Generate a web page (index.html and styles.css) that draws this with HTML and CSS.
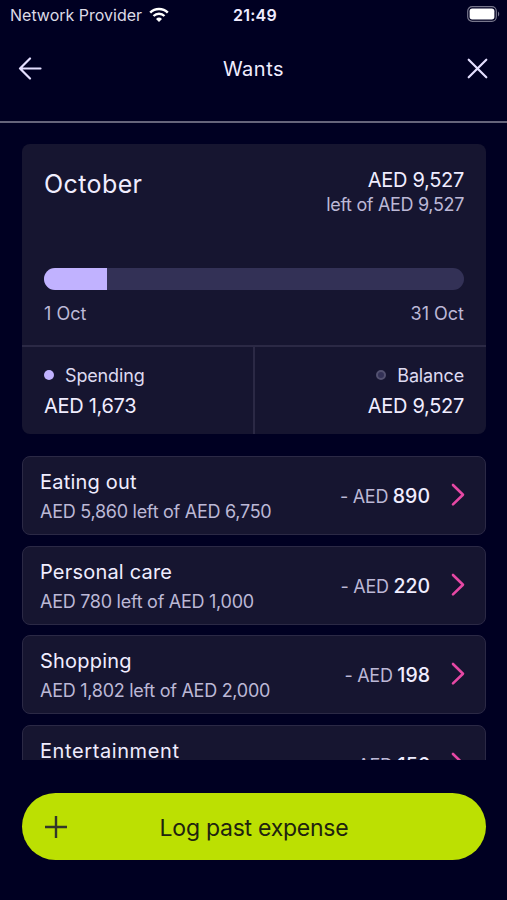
FILE: index.html
```html
<!DOCTYPE html>
<html lang="en">
<head>
  <meta charset="utf-8">
  <title>Wants</title>
  <link rel="stylesheet" href="styles.css">
</head>
<body>
  <div class="status-bar">
    <div class="carrier">
      <span>Network Provider</span>
      <svg class="wifi" width="20" height="15" viewBox="0 0 20 15">
        <path d="M1.2 5.6a12.6 12.6 0 0 1 17.6 0" fill="none" stroke="#fff" stroke-width="2.5"/>
        <path d="M4.5 9a7.9 7.9 0 0 1 11 0" fill="none" stroke="#fff" stroke-width="2.4"/>
        <path d="M10 14.9l-3-3a4.3 4.3 0 0 1 6 0z" fill="#fff"/>
      </svg>
    </div>
    <div class="time">21:49</div>
    <svg class="battery" width="33" height="16" viewBox="0 0 33 16">
      <rect x="0.7" y="0.7" width="28.6" height="14.6" rx="4.5" fill="none" stroke="#77768c" stroke-width="1.2"/>
      <rect x="2.6" y="2.6" width="24.8" height="10.8" rx="2.6" fill="#fff"/>
      <path d="M31 5.5c1.6.8 1.6 4.2 0 5z" fill="#77768c"/>
    </svg>
  </div>

  <div class="header">
    <svg width="24" height="24" viewBox="0 0 24 24">
      <path d="M12 1.500L2 11.500l10 10M2 11.500h20.500"/>
    </svg>
    <h1>Wants</h1>
    <svg width="24" height="24" viewBox="0 0 24 24">
      <path d="M3.700 2.700l17.600 17.600M21.300 2.700L3.700 20.300"/>
    </svg>
  </div>

  <div class="content">
    <div class="summary">
      <div class="summary-top">
        <h2>October</h2>
        <div class="left">
          <div class="amount">AED 9,527</div>
          <div class="left-of">left of AED 9,527</div>
        </div>
      </div>
      <div class="progress"><div class="progress-fill" style="width: 15%"></div></div>
      <div class="dates">
        <span>1 Oct</span>
        <span>31 Oct</span>
      </div>
      <div class="totals">
        <div class="total">
          <div class="legend"><i class="dot"></i><span>Spending</span></div>
          <div class="amount">AED 1,673</div>
        </div>
        <div class="total total-right">
          <div class="legend"><i class="dot dot-empty"></i><span>Balance</span></div>
          <div class="amount">AED 9,527</div>
        </div>
      </div>
    </div>

    <div class="item">
      <div class="item-text">
        <div class="item-name">Eating out</div>
        <div class="item-left">AED 5,860 left of AED 6,750</div>
      </div>
      <div class="item-amount">- AED <b>890</b></div>
      <svg class="chevron" width="14" height="24" viewBox="0 0 14 24"><path d="M2 2l10 9.700-10 9.700"/></svg>
    </div>
    <div class="item">
      <div class="item-text">
        <div class="item-name">Personal care</div>
        <div class="item-left">AED 780 left of AED 1,000</div>
      </div>
      <div class="item-amount">- AED <b>220</b></div>
      <svg class="chevron" width="14" height="24" viewBox="0 0 14 24"><path d="M2 2l10 9.700-10 9.700"/></svg>
    </div>
    <div class="item">
      <div class="item-text">
        <div class="item-name">Shopping</div>
        <div class="item-left">AED 1,802 left of AED 2,000</div>
      </div>
      <div class="item-amount">- AED <b>198</b></div>
      <svg class="chevron" width="14" height="24" viewBox="0 0 14 24"><path d="M2 2l10 9.700-10 9.700"/></svg>
    </div>
    <div class="item">
      <div class="item-text">
        <div class="item-name item-name-wide">Entertainment</div>
      </div>
      <div class="item-amount">- AED <b>156</b></div>
      <svg class="chevron" width="14" height="24" viewBox="0 0 14 24"><path d="M2 2l10 9.700-10 9.700"/></svg>
    </div>
  </div>

  <button class="log-button">
    <svg width="24" height="24" viewBox="0 0 24 24"><path d="M12 1v22M1 12h22"/></svg>
    <span>Log past expense</span>
  </button>
</body>
</html>
```
FILE: styles.css
```css
* {
  box-sizing: border-box;
}

body {
  margin: 0;
  height: 900px;
  overflow: hidden;
  background-color: #000022;
  color: #f0edff;
  font-family: Inter, "Liberation Sans", sans-serif;
}

h1, h2 {
  margin: 0;
  font-weight: 400;
}

.status-bar {
  display: grid;
  grid-template-columns: 1fr auto 1fr;
  align-items: center;
  height: 30px;
  padding: 0 7px 2px 10px;
}

.carrier {
  display: flex;
  align-items: center;
  gap: 7px;
  font-size: 16px;
  line-height: 20px;
  padding-top: 1px;
  color: #dcdae6;
}

.time {
  padding-top: 1px;
  font-size: 16px;
  font-weight: 600;
  letter-spacing: 0.3px;
}

.battery {
  justify-self: end;
}

.header {
  display: flex;
  align-items: center;
  justify-content: space-between;
  height: 93px;
  padding: 0 18px 14px;
  border-bottom: 2px solid #65647b;
}

.header h1 {
  padding-top: 1px;
  font-size: 20px;
  letter-spacing: 0.5px;
}

.header path {
  fill: none;
  stroke: #e4dfff;
  stroke-width: 2.2;
  stroke-linecap: round;
  stroke-linejoin: round;
}

.content {
  height: 637px;
  padding: 21px 21px 0 22px;
  overflow: hidden;
}

.summary {
  height: 290px;
  margin-bottom: 22px;
  border-radius: 8px;
  background-color: #161530;
}

.summary-top {
  display: flex;
  justify-content: space-between;
  height: 124px;
  padding: 24px 22px 0;
}

.summary-top h2 {
  font-size: 25px;
  line-height: 32px;
  letter-spacing: 0.4px;
}

.left {
  text-align: right;
}

.amount {
  font-size: 20px;
  line-height: 24px;
  letter-spacing: -0.3px;
}

.left-of {
  padding-top: 1px;
  font-size: 18px;
  line-height: 24px;
  letter-spacing: -0.33px;
  color: #bcb8d6;
}

.progress {
  height: 22px;
  margin: 0 22px;
  border-radius: 11px;
  background-color: #333156;
  overflow: hidden;
}

.progress-fill {
  height: 100%;
  background-color: #c1b2ff;
}

.dates {
  display: flex;
  justify-content: space-between;
  height: 55px;
  padding: 12px 22px 0;
  font-size: 18px;
  line-height: 24px;
  color: #bcb8d6;
}

.totals {
  display: flex;
  height: 89px;
  border-top: 2px solid #2b2945;
}

.total {
  flex: 0 0 231px;
  padding: 17px 22px 0;
}

.total-right {
  flex: 1;
  border-left: 2px solid #2b2945;
  text-align: right;
}

.total .amount {
  margin-top: 6px;
}

.legend {
  display: flex;
  align-items: center;
  gap: 11px;
  font-size: 18px;
  line-height: 24px;
  letter-spacing: -0.15px;
  color: #dedaf0;
}

.total-right .legend {
  justify-content: flex-end;
}

.dot {
  width: 10px;
  height: 10px;
  margin-bottom: 2px;
  border-radius: 50%;
  background-color: #c1b2ff;
}

.dot-empty {
  border: 2px solid #535170;
  background-color: #333156;
}

.item {
  display: flex;
  align-items: flex-start;
  height: 79px;
  margin-bottom: 10.6px;
  padding: 0 20px 0 17px;
  border: 1.5px solid #2b2945;
  border-radius: 8px;
  background-color: #161530;
}

.item-text {
  flex: 1;
  padding-top: 12px;
}

.item-name {
  font-size: 20px;
  line-height: 26px;
  letter-spacing: 0.2px;
}

.item-name-wide {
  letter-spacing: 0.6px;
}

.item-left {
  margin-top: 5px;
  font-size: 18px;
  line-height: 24px;
  letter-spacing: -0.27px;
  color: #bcb8d6;
}

.item-amount {
  margin-right: 21px;
  padding-top: 26px;
  font-size: 18px;
  line-height: 26px;
  letter-spacing: -0.3px;
  color: #bcb8d6;
}

.item-amount b {
  font-size: 19.5px;
  font-weight: 500;
  letter-spacing: 0;
  color: #f0edff;
}

.chevron {
  margin-top: 26px;
}

.chevron path {
  fill: none;
  stroke: #e648a4;
  stroke-width: 2.6;
  stroke-linecap: round;
  stroke-linejoin: round;
}

.log-button {
  display: flex;
  align-items: center;
  width: 464px;
  height: 67px;
  margin: 33px 0 0 22px;
  padding: 0 22px;
  border: none;
  border-radius: 34px;
  background-color: #bce002;
  color: #20230f;
  font-family: inherit;
  font-size: 23px;
  letter-spacing: -0.25px;
}

.log-button span {
  flex: 1;
  padding: 2px 24px 0 0;
}

.log-button path {
  fill: none;
  stroke: #33372a;
  stroke-width: 2.4;
}
```
